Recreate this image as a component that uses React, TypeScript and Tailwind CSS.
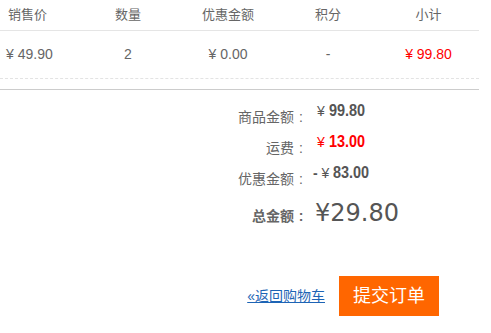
import React from "react";

const FONT = { fontFamily: '"Liberation Sans", "Noto Sans CJK SC", sans-serif' };

function Colon() {
  return <span className="inline-block w-[14px] text-center" style={{ fontFamily: '"Liberation Sans", sans-serif' }}>:</span>;
}

function Num({ children }: { children: React.ReactNode }) {
  return (
    <span className="inline-block font-bold text-[17px] scale-x-[0.85] origin-left" style={{ fontFamily: '"Liberation Sans", sans-serif' }}>
      {children}
    </span>
  );
}

export default function App() {
  return (
    <div className="w-[491px] h-[333px] bg-white overflow-hidden text-[#666]" style={FONT}>
      <div className="w-[479px]">
        <div className="grid grid-cols-[78px_100px_100px_100px_101px] h-[31px] items-center border-b border-[#e5e5e5] text-[13px]">
          <div className="pl-[8px]">销售价</div>
          <div className="text-center">数量</div>
          <div className="text-center">优惠金额</div>
          <div className="text-center">积分</div>
          <div className="text-center">小计</div>
        </div>
        <div className="grid grid-cols-[78px_100px_100px_100px_101px] h-[48px] items-center border-b border-dashed border-[#e3e3e3] text-[14px]">
          <div className="pl-[6px]">¥ 49.90</div>
          <div className="text-center">2</div>
          <div className="text-center">¥ 0.00</div>
          <div className="text-center">-</div>
          <div className="text-center text-[#f00]">¥ 99.80</div>
        </div>
        <div className="mt-[10px] border-t border-[#cccccc]"></div>
      </div>

      <div className="pt-[10px] text-[14px]">
        <div className="flex items-start h-[31px]">
          <div className="w-[308px] text-right pt-[8px] leading-[18px]">商品金额<Colon /></div>
          <div className="ml-[9px] pt-[2px] leading-[18px] text-[#555]">
            <span>¥ </span>
            <Num>99.80</Num>
          </div>
        </div>
        <div className="flex items-start h-[31px]">
          <div className="w-[308px] text-right pt-[8px] leading-[18px]">运费<Colon /></div>
          <div className="ml-[9px] pt-[2px] leading-[18px] text-[#f00]">
            <span>¥ </span>
            <Num>13.00</Num>
          </div>
        </div>
        <div className="flex items-start h-[31px]">
          <div className="w-[308px] text-right pt-[8px] leading-[18px]">优惠金额<Colon /></div>
          <div className="ml-[5px] pt-[2px] leading-[18px] text-[#555]">
            <span className="font-bold">- </span>
            <span>¥ </span>
            <Num>83.00</Num>
          </div>
        </div>
        <div className="flex items-start h-[40px]">
          <div className="w-[308px] text-right pt-[14px] leading-[18px] font-bold">总金额<Colon /></div>
          <div
            className="ml-[7px] pt-[6px] leading-[28px] text-[24px] text-[#555]"
            style={{ fontFamily: '"DejaVu Sans", "Liberation Sans", sans-serif' }}
          >
            ¥29.80
          </div>
        </div>
      </div>

      <div className="mt-[43px] flex items-center justify-end pr-[52px] gap-[14px]">
        <a href="#" className="text-[14px] text-[#1d64b5] underline leading-[18px]">«返回购物车</a>
        <button className="w-[100px] h-[40px] bg-[#ff6600] text-white text-[18px]">提交订单</button>
      </div>
    </div>
  );
}
